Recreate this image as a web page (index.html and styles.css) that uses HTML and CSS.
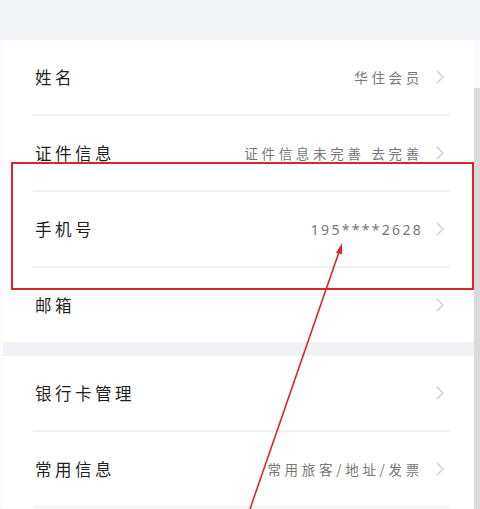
FILE: index.html
```html
<!DOCTYPE html>
<html lang="zh">
<head>
<meta charset="utf-8">
<link rel="stylesheet" href="styles.css">
</head>
<body>
<div class="page">
  <div class="top"></div>
  <section class="group">
    <div class="row"><span class="label">姓名</span><span class="value">华住会员<svg class="chev" viewBox="0 0 8 14"><polyline points="1,1 7,7 1,13"/></svg></span></div>
    <div class="row"><span class="label">证件信息</span><span class="value">证件信息未完善 去完善<svg class="chev" viewBox="0 0 8 14"><polyline points="1,1 7,7 1,13"/></svg></span></div>
    <div class="row"><span class="label">手机号</span><span class="value num">195****2628<svg class="chev" viewBox="0 0 8 14"><polyline points="1,1 7,7 1,13"/></svg></span></div>
    <div class="row last"><span class="label">邮箱</span><span class="value"><svg class="chev" viewBox="0 0 8 14"><polyline points="1,1 7,7 1,13"/></svg></span></div>
  </section>
  <div class="gap"></div>
  <section class="group">
    <div class="row"><span class="label">银行卡管理</span><span class="value"><svg class="chev" viewBox="0 0 8 14"><polyline points="1,1 7,7 1,13"/></svg></span></div>
    <div class="row"><span class="label">常用信息</span><span class="value">常用旅客/地址/发票<svg class="chev" viewBox="0 0 8 14"><polyline points="1,1 7,7 1,13"/></svg></span></div>
  </section>
  <div class="scrollbar"></div>
  <div class="highlight"></div>
  <svg class="arrow" width="480" height="509" viewBox="0 0 480 509">
    <line x1="250" y1="509" x2="339" y2="252" stroke="#d8262a" stroke-width="1.6"/>
    <polygon points="342,243 336,253 342,254" fill="#d8262a"/>
  </svg>
</div>
</body>
</html>
```
FILE: styles.css
```css
* { box-sizing: border-box; }
html, body { margin: 0; padding: 0; background: #fff; }
body {
  font-family: "Noto Sans CJK SC", "Noto Sans", sans-serif;
  width: 480px;
  height: 509px;
  overflow: hidden;
}
.page {
  position: relative;
  width: 480px;
  height: 509px;
  background: #fbfbfc;
  padding-left: 3px;
}
.top {
  height: 40px;
  margin-left: -3px;
  background: #f2f4f8;
}
.group {
  background: #fff;
  width: 471px;
}
.row {
  height: 76px;
  margin: 0 24px 0 30px;
  padding: 0 6px 0 2px;
  border-bottom: 2px solid #f2f2f3;
  display: flex;
  align-items: center;
  justify-content: space-between;
}
.row.last {
  height: 74px;
  border-bottom: none;
}
.label {
  font-size: 16.5px;
  letter-spacing: 3.5px;
  color: #1f1f1f;
}
.value {
  display: flex;
  align-items: center;
  font-size: 13.5px;
  letter-spacing: 3.7px;
  color: #777;
}
.value.num {
  font-family: "Noto Sans", sans-serif;
  font-size: 14px;
  letter-spacing: 2.3px;
}
.chev {
  width: 8px;
  height: 14px;
  margin-left: 13px;
  fill: none;
  stroke: #c8c8c8;
  stroke-width: 1.2;
}
.gap {
  height: 14px;
  width: 471px;
  background: #f1f2f5;
}
.scrollbar {
  position: absolute;
  right: 0;
  top: 88px;
  width: 6px;
  bottom: 0;
  background: #dadada;
}
.highlight {
  position: absolute;
  left: 11px;
  top: 162px;
  width: 463px;
  height: 128px;
  border: 2px solid #d8262a;
}
.arrow {
  position: absolute;
  left: 0;
  top: 0;
}
```
